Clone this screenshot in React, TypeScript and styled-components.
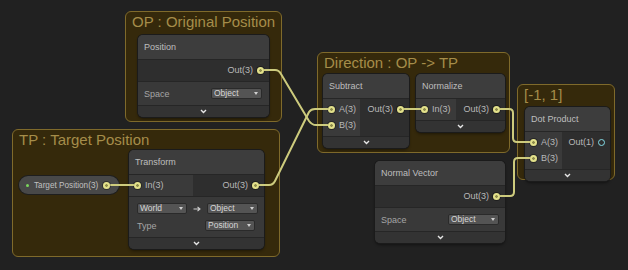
import React from "react";
import styled, { createGlobalStyle } from "styled-components";

const Global = createGlobalStyle`
  html, body { margin: 0; padding: 0; background: #202020; }
  body {
    width: 628px; height: 270px; overflow: hidden;
    font-family: "Liberation Sans", Arial, sans-serif;
  }
`;

const Canvas = styled.div`
  position: relative;
  width: 628px;
  height: 270px;
  background: #212121;
  overflow: hidden;
`;

/* ---------- groups ---------- */
const Group = styled.div<{ $x: number; $y: number; $w: number; $h: number }>`
  position: absolute;
  left: ${(p) => p.$x}px;
  top: ${(p) => p.$y}px;
  width: ${(p) => p.$w}px;
  height: ${(p) => p.$h}px;
  box-sizing: border-box;
  background: #35290b;
  border: 1px solid #7f6a2b;
  border-radius: 6px;
  display: flex;
  flex-direction: column;
`;

const GroupTitle = styled.div<{ $h: number }>`
  height: ${(p) => p.$h}px;
  flex: none;
  padding: 1px 0 0 6px;
  box-sizing: border-box;
  font-size: 15px;
  line-height: 18px;
  color: #a58d4a;
  white-space: nowrap;
`;

const GroupBody = styled.div<{ $pl: number; $gap: number }>`
  display: flex;
  align-items: flex-start;
  padding-left: ${(p) => p.$pl}px;
  gap: ${(p) => p.$gap}px;
`;

const Floating = styled.div<{ $x: number; $y: number }>`
  position: absolute;
  left: ${(p) => p.$x}px;
  top: ${(p) => p.$y}px;
`;

/* ---------- nodes ---------- */
const NodeBox = styled.div<{ $w: number }>`
  flex: none;
  width: ${(p) => p.$w}px;
  border-radius: 5px;
  overflow: hidden;
  background: #383838;
  box-shadow: 0 0 0 1px #1b1b1b, 0 2px 3px rgba(0, 0, 0, 0.45);
  font-size: 9px;
`;

const Header = styled.div`
  height: 24px;
  box-sizing: border-box;
  padding-left: 6px;
  display: flex;
  align-items: center;
  background: #3d3d3d;
  color: #bdbdbd;
`;

const Ports = styled.div`
  display: flex;
  border-top: 1px solid #262626;
`;

const InCol = styled.div<{ $w: number }>`
  width: ${(p) => p.$w}px;
  flex: none;
  box-sizing: border-box;
  padding: 2px 0 3px;
  background: #3a3a3a;
  display: flex;
  flex-direction: column;
`;

const OutCol = styled.div`
  flex: 1;
  padding: 2px 0 3px;
  background: #2e2e2e;
  display: flex;
  flex-direction: column;
  align-items: flex-end;
`;

const Port = styled.div`
  height: 16px;
  display: flex;
  align-items: center;
  gap: 4px;
  padding: 0 5px;
  color: #b8b8b8;
  white-space: nowrap;
`;

const Dot = styled.span<{ $kind?: "vec" | "float" }>`
  width: 7px;
  height: 7px;
  box-sizing: border-box;
  border-radius: 50%;
  flex: none;
  ${(p) =>
    p.$kind === "float"
      ? `border: 1.5px solid #84dce6; background: transparent;`
      : `background: radial-gradient(circle, #8d8b4c 0 1px, #e2e08a 1.6px 100%);
         box-shadow: 0 0 0 1px rgba(0,0,0,0.35);`}
`;

const Props = styled.div<{ $pl?: number; $pr?: number }>`
  border-top: 1px solid #262626;
  padding: 3px ${(p) => p.$pr ?? 6}px 3px ${(p) => p.$pl ?? 6}px;
  background: #393939;
  color: #a5a5a5;
`;

const PropRow = styled.div`
  height: 17px;
  display: flex;
  align-items: center;
  justify-content: space-between;
`;

const Dropdown = styled.div<{ $w: number; $mr?: number }>`
  width: ${(p) => p.$w}px;
  height: 11px;
  margin-right: ${(p) => p.$mr ?? 0}px;
  box-sizing: border-box;
  border: 1px solid #2a2a2a;
  border-radius: 2px;
  background: #545454;
  color: #d6d6d6;
  font-size: 8.5px;
  line-height: 9px;
  padding-left: 2px;
  display: flex;
  align-items: center;
  justify-content: space-between;
  &::after {
    content: "";
    margin-right: 3px;
    border-left: 2.5px solid transparent;
    border-right: 2.5px solid transparent;
    border-top: 3px solid #cfcfcf;
  }
`;

const ArrowIcon = () => (
  <svg width="8" height="6" viewBox="0 0 8 6">
    <path
      d="M0.5 3 H7 M4.5 0.8 L7 3 L4.5 5.2"
      fill="none"
      stroke="#cfcfcf"
      strokeWidth="1.1"
    />
  </svg>
);

const Collapse = styled.div`
  height: 11px;
  border-top: 1px solid #262626;
  background: #333333;
  display: flex;
  align-items: center;
  justify-content: center;
`;

const Chevron = () => (
  <svg width="7" height="5" viewBox="0 0 7 5">
    <path d="M1 1 L3.5 3.5 L6 1" fill="none" stroke="#e6e6e6" strokeWidth="1.4" />
  </svg>
);

/* ---------- property pill ---------- */
const Pill = styled.div`
  flex: none;
  margin-top: 26px;
  width: 100px;
  height: 18px;
  box-sizing: border-box;
  border-radius: 9px;
  background: #484848;
  box-shadow: 0 0 0 1px #1e1e1e;
  display: flex;
  align-items: center;
  padding: 0 9px 0 7px;
  font-size: 8.2px;
  color: #c0c0c0;
  white-space: nowrap;
`;

const PillLed = styled.span`
  width: 3px;
  height: 3px;
  border-radius: 50%;
  background: #7bd65c;
  margin-right: 5px;
  flex: none;
`;

const PillLabel = styled.span`
  flex: 1;
`;

/* ---------- wires ---------- */
const Wires = styled.svg`
  position: absolute;
  left: 0;
  top: 0;
  z-index: 5;
  pointer-events: none;
`;

const Wire = styled.path`
  fill: none;
  stroke: #cdcb7d;
  stroke-width: 2;
  stroke-linecap: round;
  stroke-linejoin: round;
`;

/* ---------- generic node ---------- */
type PortDef = { label: string; kind?: "vec" | "float" };

const Node: React.FC<{
  title: string;
  width: number;
  inWidth?: number;
  inputs?: PortDef[];
  outputs: PortDef[];
  children?: React.ReactNode;
}> = ({ title, width, inWidth, inputs, outputs, children }) => (
  <NodeBox $w={width}>
    <Header>{title}</Header>
    <Ports>
      {inputs && inWidth ? (
        <InCol $w={inWidth}>
          {inputs.map((p) => (
            <Port key={p.label}>
              <Dot $kind={p.kind} />
              {p.label}
            </Port>
          ))}
        </InCol>
      ) : null}
      <OutCol>
        {outputs.map((p) => (
          <Port key={p.label}>
            {p.label}
            <Dot $kind={p.kind} />
          </Port>
        ))}
      </OutCol>
    </Ports>
    {children}
    <Collapse>
      <Chevron />
    </Collapse>
  </NodeBox>
);

const v3 = (label: string): PortDef => ({ label });

export default function App() {
  return (
    <>
      <Global />
      <Canvas>
        <Group $x={125} $y={11} $w={157} $h={111}>
          <GroupTitle $h={23}>OP : Original Position</GroupTitle>
          <GroupBody $pl={12} $gap={0}>
            <Node title="Position" width={131} outputs={[v3("Out(3)")]}>
              <Props $pr={7}>
                <PropRow>
                  Space
                  <Dropdown $w={51}>Object</Dropdown>
                </PropRow>
              </Props>
            </Node>
          </GroupBody>
        </Group>

        <Group $x={12} $y={129} $w={268} $h={128}>
          <GroupTitle $h={20}>TP : Target Position</GroupTitle>
          <GroupBody $pl={6} $gap={10}>
            <Pill>
              <PillLed />
              <PillLabel>Target Position(3)</PillLabel>
              <Dot />
            </Pill>
            <Node
              title="Transform"
              width={135}
              inWidth={64}
              inputs={[v3("In(3)")]}
              outputs={[v3("Out(3)")]}
            >
              <Props $pl={8} $pr={6}>
                <PropRow>
                  <Dropdown $w={50}>World</Dropdown>
                  <ArrowIcon />
                  <Dropdown $w={51}>Object</Dropdown>
                </PropRow>
                <PropRow>
                  Type
                  <Dropdown $w={50} $mr={3}>
                    Position
                  </Dropdown>
                </PropRow>
              </Props>
            </Node>
          </GroupBody>
        </Group>

        <Group $x={317} $y={52} $w={193} $h={101}>
          <GroupTitle $h={21}>Direction : OP -&gt; TP</GroupTitle>
          <GroupBody $pl={5} $gap={7}>
            <Node
              title="Subtract"
              width={86}
              inWidth={37}
              inputs={[v3("A(3)"), v3("B(3)")]}
              outputs={[v3("Out(3)")]}
            />
            <Node
              title="Normalize"
              width={89}
              inWidth={40}
              inputs={[v3("In(3)")]}
              outputs={[v3("Out(3)")]}
            />
          </GroupBody>
        </Group>

        <Group $x={517} $y={84} $w={98} $h={96}>
          <GroupTitle $h={22}>[-1, 1]</GroupTitle>
          <GroupBody $pl={7} $gap={0}>
            <Node
              title="Dot Product"
              width={85}
              inWidth={37}
              inputs={[v3("A(3)"), v3("B(3)")]}
              outputs={[{ label: "Out(1)", kind: "float" }]}
            />
          </GroupBody>
        </Group>

        <Floating $x={375} $y={161}>
          <Node title="Normal Vector" width={130} outputs={[v3("Out(3)")]}>
            <Props>
              <PropRow>
                Space
                <Dropdown $w={51}>Object</Dropdown>
              </PropRow>
            </Props>
          </Node>
        </Floating>

        <Wires width="628" height="270" viewBox="0 0 628 270">
          <Wire d="M111 185 H133.5" />
          <Wire d="M259.5 185 H269 Q273 185 275 181 L309 112 Q311 109 315 109 H327.5" />
          <Wire d="M264.5 70 H275 Q279 70 281 74 L309 121 Q312 125 316 125 H327.5" />
          <Wire d="M404.5 109 H420.5" />
          <Wire d="M500.5 109 H509 Q513 109 513 113 V138 Q513 142 517 142 H529.5" />
          <Wire d="M500.5 196 H510 Q514 196 514 192 V162 Q514 158 518 158 H529.5" />
        </Wires>
      </Canvas>
    </>
  );
}
